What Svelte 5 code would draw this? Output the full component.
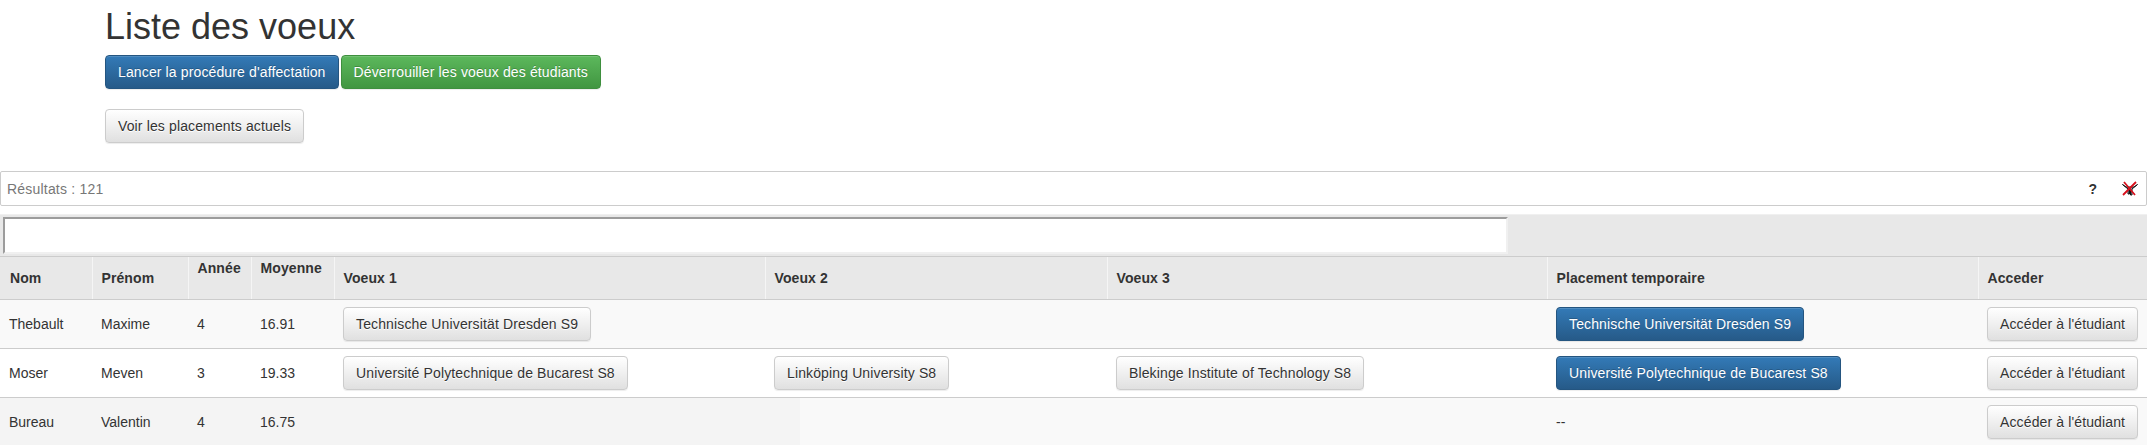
<script>
  const rows = [
    {
      nom: "Thebault",
      prenom: "Maxime",
      annee: "4",
      moyenne: "16.91",
      voeux: ["Technische Universität Dresden S9", "", ""],
      placement: "Technische Universität Dresden S9",
    },
    {
      nom: "Moser",
      prenom: "Meven",
      annee: "3",
      moyenne: "19.33",
      voeux: [
        "Université Polytechnique de Bucarest S8",
        "Linköping University S8",
        "Blekinge Institute of Technology S8",
      ],
      placement: "Université Polytechnique de Bucarest S8",
    },
    {
      nom: "Bureau",
      prenom: "Valentin",
      annee: "4",
      moyenne: "16.75",
      voeux: ["", "", ""],
      placement: "",
    },
  ];

  const widths = [92, 96, 63, 83, 431, 342, 440, 431, 169];
</script>

<div class="page">
  <header class="head">
    <h1>Liste des voeux</h1>
    <div class="actions">
      <button class="btn primary">Lancer la procédure d'affectation</button>
      <button class="btn success">Déverrouiller les voeux des étudiants</button>
    </div>
    <div class="actions second">
      <button class="btn">Voir les placements actuels</button>
    </div>
  </header>

  <div class="panel">
    <span class="count">Résultats : 121</span>
    <div class="tools">
      <span class="help">?</span>
      <svg class="filter-off" width="18" height="16" viewBox="0 0 18 16" aria-hidden="true">
        <path d="M1.5 3.5L7 8v5h1.5V8h1v6H11V8l5.5-4.5L13 6H5z" fill="#8d9cae" stroke="#111" stroke-width="1" />
        <path d="M3 1l11 13M15 1L2 14" stroke="#d8101c" stroke-width="1.8" fill="none" />
      </svg>
    </div>
  </div>

  <div class="filter">
    <input type="text" />
  </div>

  <table>
    <colgroup>
      {#each widths as w}
        <col style="width: {w}px" />
      {/each}
    </colgroup>
    <thead>
      <tr>
        <th>Nom</th>
        <th>Prénom</th>
        <th class="top">Année</th>
        <th class="top">Moyenne</th>
        <th>Voeux 1</th>
        <th>Voeux 2</th>
        <th>Voeux 3</th>
        <th>Placement temporaire</th>
        <th>Acceder</th>
      </tr>
    </thead>
    <tbody>
      {#each rows as row}
        <tr>
          <td>{row.nom}</td>
          <td>{row.prenom}</td>
          <td>{row.annee}</td>
          <td>{row.moyenne}</td>
          {#each row.voeux as v}
            <td>
              {#if v}
                <button class="btn">{v}</button>
              {/if}
            </td>
          {/each}
          <td>
            {#if row.placement}
              <button class="btn primary">{row.placement}</button>
            {:else}
              --
            {/if}
          </td>
          <td><button class="btn">Accéder à l'étudiant</button></td>
        </tr>
      {/each}
    </tbody>
  </table>
</div>

<style>
  :global(body) {
    margin: 0;
    background: #fff;
    overflow: hidden;
  }

  .page {
    font-family: "Liberation Sans", Arial, sans-serif;
    font-size: 14px;
    line-height: 20px;
    color: #333;
    height: 445px;
    overflow: hidden;
  }

  .head {
    padding: 0 0 0 105px;
  }

  h1 {
    margin: 0;
    padding-top: 7px;
    font-size: 36px;
    font-weight: 400;
    line-height: 39px;
    height: 48px;
  }

  .actions {
    display: flex;
    gap: 2px;
  }

  .second {
    margin-top: 20px;
  }

  .btn {
    display: inline-block;
    height: 34px;
    padding: 6px 12px;
    font: inherit;
    letter-spacing: 0.13px;
    color: #333;
    white-space: nowrap;
    border: 1px solid #ccc;
    border-radius: 4px;
    background: linear-gradient(to bottom, #fff 0, #e0e0e0 100%);
    text-shadow: 0 1px 0 #fff;
    box-shadow: inset 0 1px 0 rgba(255, 255, 255, 0.15), 0 1px 1px rgba(0, 0, 0, 0.075);
  }

  .primary {
    color: #fff;
    border-color: #245580;
    background: linear-gradient(to bottom, #337ab7 0, #265a88 100%);
    text-shadow: 0 -1px 0 rgba(0, 0, 0, 0.2);
  }

  .success {
    color: #fff;
    border-color: #3e8f3e;
    background: linear-gradient(to bottom, #5cb85c 0, #419641 100%);
    text-shadow: 0 -1px 0 rgba(0, 0, 0, 0.2);
  }

  .panel {
    display: flex;
    justify-content: space-between;
    align-items: center;
    box-sizing: border-box;
    height: 35px;
    margin-top: 28px;
    padding: 0 7px 0 6px;
    border: 1px solid #ccc;
    border-radius: 2px;
  }

  .count {
    color: #777;
    letter-spacing: 0.2px;
  }

  .tools {
    display: flex;
    align-items: center;
    gap: 24px;
  }

  .help {
    font-weight: 700;
    color: #333;
  }

  .filter {
    box-sizing: border-box;
    height: 42px;
    margin-top: 8px;
    padding: 2px 0 2px 3px;
    background: #e8e8e8;
    border-top: 1px solid #f0f0f0;
  }

  input {
    display: block;
    box-sizing: border-box;
    width: 1505px;
    height: 37px;
    padding: 0;
    background: #fff;
    border-style: solid;
    border-width: 2px;
    border-color: #9c9c9c #f0f0f0 #f0f0f0 #9c9c9c;
  }

  table {
    table-layout: fixed;
    width: 2147px;
    border-collapse: collapse;
  }

  th {
    box-sizing: border-box;
    height: 43px;
    padding: 0 9px;
    text-align: left;
    font-weight: 700;
    letter-spacing: 0.1px;
    background: #e8e8e8;
    border-top: 1px solid #ccc;
    border-bottom: 1px solid #ccc;
    border-left: 1px solid #f5f5f5;
  }

  th:first-child {
    padding-left: 10px;
    border-left: 0;
  }

  th.top {
    vertical-align: top;
    padding-top: 1px;
  }

  td {
    box-sizing: border-box;
    height: 49px;
    padding: 0 9px;
    border-bottom: 1px solid #ccc;
  }

  tbody tr:nth-child(odd) {
    background: #f9f9f9;
  }

  tbody tr:nth-child(3) {
    background: linear-gradient(to right, #f4f4f4 800px, #f9f9f9 800px);
  }
</style>
